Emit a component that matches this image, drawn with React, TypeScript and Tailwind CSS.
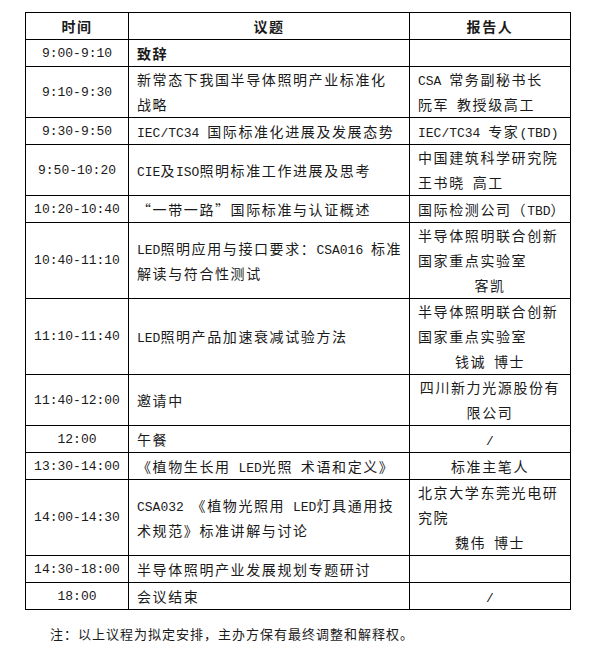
import React from 'react'

type Line = { t: string; center?: boolean }
const L = (t: string): Line => ({ t })
const C = (t: string): Line => ({ t, center: true })

type Row = { time: string; topic: string[]; bold?: boolean; speaker: Line[]; h: string }

const rows: Row[] = [
  { time: '9:00-9:10', topic: ['致辞'], bold: true, speaker: [], h: 'h-[27px]' },
  { time: '9:10-9:30', topic: ['新常态下我国半导体照明产业标准化', '战略'], speaker: [L('CSA 常务副秘书长'), L('阮军 教授级高工')], h: 'h-[51px]' },
  { time: '9:30-9:50', topic: ['IEC/TC34 国际标准化进展及发展态势'], speaker: [L('IEC/TC34 专家(TBD)')], h: 'h-[27px]' },
  { time: '9:50-10:20', topic: ['CIE及ISO照明标准工作进展及思考'], speaker: [L('中国建筑科学研究院'), L('王书晓 高工')], h: 'h-[51px]' },
  { time: '10:20-10:40', topic: ['“一带一路”国际标准与认证概述'], speaker: [L('国际检测公司（TBD）')], h: 'h-[27px]' },
  { time: '10:40-11:10', topic: ['LED照明应用与接口要求：CSA016 标准', '解读与符合性测试'], speaker: [L('半导体照明联合创新'), L('国家重点实验室'), C('客凯')], h: 'h-[75px]' },
  { time: '11:10-11:40', topic: ['LED照明产品加速衰减试验方法'], speaker: [L('半导体照明联合创新'), L('国家重点实验室'), C('钱诚 博士')], h: 'h-[76px]' },
  { time: '11:40-12:00', topic: ['邀请中'], speaker: [C('四川新力光源股份有'), C('限公司')], h: 'h-[50px]' },
  { time: '12:00', topic: ['午餐'], speaker: [C('/')], h: 'h-[27px]' },
  { time: '13:30-14:00', topic: ['《植物生长用 LED光照 术语和定义》'], speaker: [C('标准主笔人')], h: 'h-[27px]' },
  { time: '14:00-14:30', topic: ['CSA032 《植物光照用 LED灯具通用技', '术规范》标准讲解与讨论'], speaker: [L('北京大学东莞光电研'), L('究院'), C('魏伟 博士')], h: 'h-[76px]' },
  { time: '14:30-18:00', topic: ['半导体照明产业发展规划专题研讨'], speaker: [], h: 'h-[27px]' },
  { time: '18:00', topic: ['会议结束'], speaker: [C('/')], h: 'h-[27px]' },
]

// latin runs go in mono so they come out half the width of the CJK glyphs
function Mixed({ s }: { s: string }) {
  const parts = s.split(/([\x20-\x7E]+)/)
  return (
    <>
      {parts.map((p, i) =>
        /^[\x20-\x7E]+$/.test(p) ? (
          <span key={i} className="font-['Liberation_Mono',monospace] text-[13px] leading-none tracking-normal">
            {p}
          </span>
        ) : (
          p
        )
      )}
    </>
  )
}

const App: React.FC = () => {
  return (
    <div className="min-h-[651px] bg-white pt-[12px] pl-[25px] text-[#1a1a1a] font-['Noto_Sans_CJK_SC',sans-serif] text-[14px] leading-[25px] tracking-[1.6px]">
      <table className="border-collapse table-fixed w-[545px]">
        <colgroup>
          <col className="w-[103px]" />
          <col className="w-[281px]" />
          <col className="w-[161px]" />
        </colgroup>
        <thead>
          <tr className="h-[27px]">
            <th className="border border-black font-bold text-center p-0">时间</th>
            <th className="border border-black font-bold text-center p-0">议题</th>
            <th className="border border-black font-bold text-center p-0">报告人</th>
          </tr>
        </thead>
        <tbody>
          {rows.map((r) => (
            <tr key={r.time} className={r.h}>
              <td className="border border-black p-0 text-center align-middle font-['Liberation_Mono',monospace] text-[13px] tracking-normal whitespace-pre">
                {r.time}
              </td>
              <td className={`border border-black py-0 pl-[8px] pr-1 align-middle ${r.bold ? 'font-bold' : ''}`}>
                {r.topic.map((t, i) => (
                  <div key={i} className="whitespace-pre">
                    <Mixed s={t} />
                  </div>
                ))}
              </td>
              <td className="border border-black py-0 pl-[8px] pr-1 align-middle">
                {r.speaker.map((l, i) => (
                  <div key={i} className={`whitespace-pre ${l.center ? 'text-center -ml-[8px] -mr-1' : ''}`}>
                    <Mixed s={l.t} />
                  </div>
                ))}
              </td>
            </tr>
          ))}
        </tbody>
      </table>
      <p className="mt-[11px] ml-[25px] text-[13px] tracking-[1px]">
        注：以上议程为拟定安排，主办方保有最终调整和解释权。
      </p>
    </div>
  )
}

export default App
